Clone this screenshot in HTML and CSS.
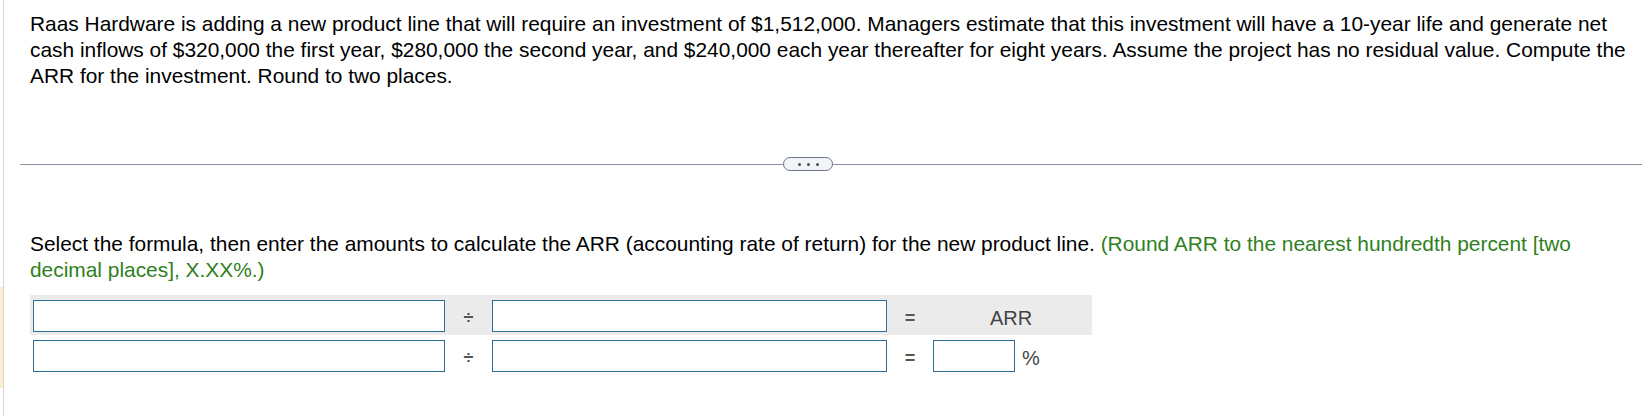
FILE: index.html
```html
<!DOCTYPE html>
<html lang="en">
<head>
<meta charset="utf-8">
<title>ARR question</title>
<link rel="stylesheet" href="styles.css">
</head>
<body>
<div class="mark"></div>
<div class="frame">
  <p class="question">Raas Hardware is adding a new product line that will require an investment of $1,512,000. Managers estimate that this investment will have a 10-year life and generate net cash inflows of $320,000 the first year, $280,000 the second year, and $240,000 each year thereafter for eight years. Assume the project has no residual value. Compute the ARR for the investment. Round to two places.</p>
  <div class="sep">
    <span class="sep-line sep-left"></span>
    <span class="pill"><i class="dot"></i><i class="dot"></i><i class="dot"></i></span>
    <span class="sep-line sep-right"></span>
  </div>
  <p class="instr">Select the formula, then enter the amounts to calculate the ARR (accounting rate of return) for the new product line. <span class="hint">(Round ARR to the nearest hundredth percent [two decimal places], X.XX%.)</span></p>
  <table class="formula">
    <tr class="head">
      <td class="c-in1"><input class="box wide1" type="text"></td>
      <td class="c-op">&divide;</td>
      <td class="c-in2"><input class="box wide2" type="text"></td>
      <td class="c-op">=</td>
      <td class="c-res"><span class="label">ARR</span></td>
    </tr>
    <tr>
      <td class="c-in1"><input class="box wide1" type="text"></td>
      <td class="c-op">&divide;</td>
      <td class="c-in2"><input class="box wide2" type="text"></td>
      <td class="c-op">=</td>
      <td class="c-res"><div class="res-row"><input class="box small" type="text"><span class="pct">%</span></div></td>
    </tr>
  </table>
</div>
</body>
</html>
```
FILE: styles.css
```css
html, body {
  margin: 0;
  padding: 0;
  background: #ffffff;
}
body {
  font-family: "Liberation Sans", Arial, Helvetica, sans-serif;
  color: #000000;
  position: relative;
  min-height: 416px;
}
.mark {
  position: absolute;
  left: 0;
  top: 287px;
  width: 3px;
  height: 101px;
  background: #fbefc9;
}
.frame {
  margin-left: 3px;
  border-left: 1px solid #d4d4da;
  min-height: 416px;
  padding-left: 26px;
  padding-top: 11px;
  box-sizing: border-box;
}
.question, .instr {
  margin: 0;
  font-size: 20.9px;
  line-height: 26px;
  width: 1605px;
}
.sep {
  display: flex;
  align-items: center;
  margin-top: 68px;
  margin-left: -10px;
  width: 1622px;
  height: 14px;
}
.sep-line {
  height: 1px;
  background: #8a93a3;
}
.sep-left {
  width: 763px;
}
.sep-right {
  flex: 1;
}
.pill {
  width: 50px;
  height: 14px;
  box-sizing: border-box;
  border: 1px solid #6e7888;
  border-radius: 7px;
  background: #f1f3f6;
  display: flex;
  align-items: center;
  justify-content: center;
  gap: 6px;
}
.dot {
  width: 3px;
  height: 3px;
  border-radius: 50%;
  background: #4a4f57;
}
.instr {
  margin-top: 60px;
}
.hint {
  color: #2f7f22;
}
.formula {
  margin-top: 12px;
  border-collapse: collapse;
  border-spacing: 0;
}
.formula td {
  padding: 5px 0 3px;
  vertical-align: middle;
}
.head td {
  background: #ebebeb;
}
.c-in1 {
  width: 418px;
  padding-left: 3px !important;
  box-sizing: border-box;
}
.c-in2 {
  width: 401px;
  padding-left: 3px !important;
  box-sizing: border-box;
}
.c-op {
  width: 40px;
  text-align: center;
  font-size: 18px;
  font-weight: bold;
  color: #555555;
  padding-top: 9px !important;
}
.formula td.c-op:nth-child(2) {
  width: 41px;
}
.c-res {
  width: 162px;
  text-align: center;
}
.label {
  font-size: 20px;
  color: #444444;
  position: relative;
  top: 2px;
}
.box {
  display: block;
  box-sizing: border-box;
  height: 32px;
  margin: 0;
  padding: 0 4px;
  border: 1px solid #2d6f96;
  border-radius: 0;
  background: #ffffff;
  font: inherit;
}
.wide1 {
  width: 412px;
}
.wide2 {
  width: 395px;
}
.res-row {
  display: flex;
  align-items: center;
  padding-left: 3px;
}
.small {
  width: 82px;
}
.pct {
  margin-left: 7px;
  font-size: 20px;
  color: #444444;
  position: relative;
  top: 2px;
}
```
